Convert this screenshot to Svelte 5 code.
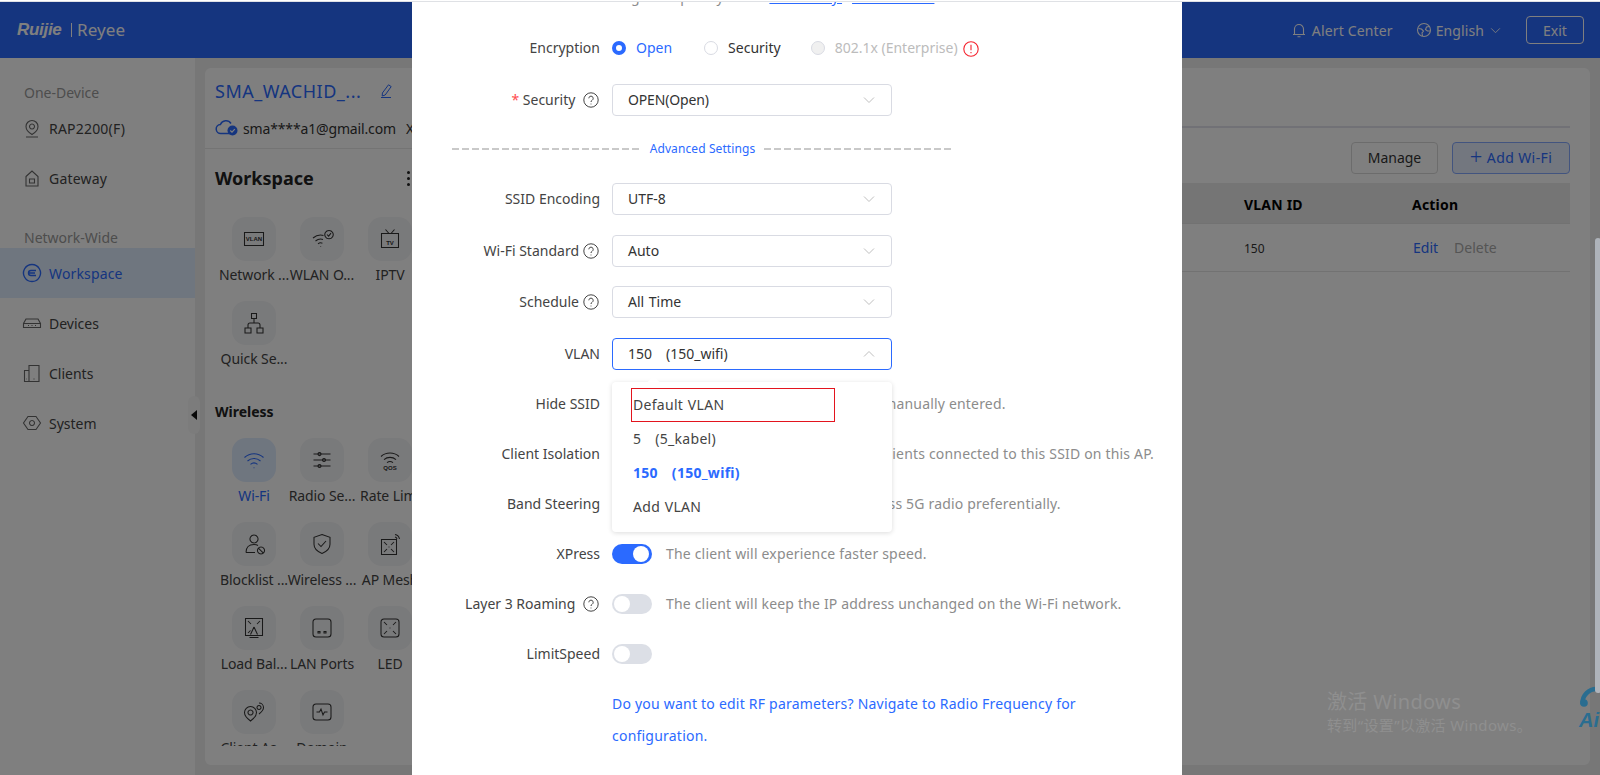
<script>
  const tileIcons = {
    vlan: { d: 'M2.500 5.500h19v13h-19z', text: 'VLAN', tx: 12, ty: 14.200, ts: 6.500 },
    wlan: { d: 'M3 11c3-2.600 7-3.600 10.500-2.600M5.500 14c2.200-1.800 5-2.400 7.500-1.600M8 16.800c1.300-1 3-1.200 4.400-.6M19 3.400a4.200 4.200 0 1 0 .01 0M17 7.500l1.600 1.600 2.400-3M10.500 19.400h.6' },
    tv: { d: 'M3.500 6.500h17v14h-17zM7.500 2.500l3.500 4M16.500 2.500l-3.500 4', text: 'TV', tx: 12, ty: 17.500, ts: 9 },
    quick: { d: 'M9.500 2.500h5v5h-5zM3 17h6v5H3zM15 17h6v5h-6zM12 7.500V12M6 17v-3a2 2 0 0 1 2-2h8a2 2 0 0 1 2 2v3' },
    wifi: { d: 'M2.500 9.500c5.500-5 13.500-5 19 0M5.500 13c3.800-3.400 9.200-3.400 13 0M8.500 16.400c2-1.700 5-1.700 7 0M11.600 19.800h.8' },
    radio: { d: 'M3.500 6h17M3.500 12h17M3.500 18h17M9.500 4.400a1.600 1.600 0 1 0 .01 0M14 10.400a1.600 1.600 0 1 0 .01 0M9.500 16.400a1.600 1.600 0 1 0 .01 0' },
    rate: { d: 'M3 8.500c5-4.600 13-4.600 18 0M6 11.600c3.400-3 8.600-3 12 0M9 14.600c1.800-1.400 4.200-1.400 6 0', text: 'QOS', tx: 12, ty: 21.500, ts: 6 },
    block: { d: 'M12 3a4 4 0 1 0 .01 0M4 20.500c0-5 2.800-8 8-8 1.600 0 3 .3 4 1M4 20.500h9M19 15a3.500 3.500 0 1 0 .01 0M16.600 16.300l4.800 4.800' },
    shield: { d: 'M12 2.500l8 2.800v7c0 4.400-3.600 7.400-8 9.200-4.400-1.800-8-4.800-8-9.200v-7zM8 11.500l3 3 5-5.500' },
    mesh: { d: 'M3.500 7.500h15v15h-15zM6 10l3 3M16 10l-3 3M6 20l3-3M16 20l-3-3M10.600 15h.8M17 2.500c2.200.4 4 2.200 4.500 4.500M17 5c1 .2 1.800 1 2 2' },
    load: { d: 'M3.500 2.500h17v17h-17zM6 5l3 3M18 5l-3 3M6 17l2.500-2.500M12 11l-3.500 7.500M12 11l3.500 7.500M7.500 21.500h9' },
    lan: { d: 'M6 3h12a3 3 0 0 1 3 3v12a3 3 0 0 1-3 3H6a3 3 0 0 1-3-3V6a3 3 0 0 1 3-3zM8 15.500h2v1.500H8zM14 15.500h2v1.500h-2z' },
    led: { d: 'M6 3h12a3 3 0 0 1 3 3v12a3 3 0 0 1-3 3H6a3 3 0 0 1-3-3V6a3 3 0 0 1 3-3zM6 6l3 3M18 6l-3 3M6 18l3-3M18 18l-3-3M11.600 12h.8' },
    pins: { d: 'M8.500 6.500a6 6 0 0 1 6 6c0 4-6 8.500-6 8.500s-6-4.500-6-8.500a6 6 0 0 1 6-6zM8.500 10a2.500 2.500 0 1 0 .01 0M17 3a4.500 4.500 0 0 1 4.500 4.500c0 3-4.500 6.500-4.500 6.500M17 5.500a2 2 0 1 0 .01 0' },
    domain: { d: 'M6 4h12a3 3 0 0 1 3 3v10a3 3 0 0 1-3 3H6a3 3 0 0 1-3-3V7a3 3 0 0 1 3-3zM6.500 12h3l1.500-3 2 6 1.500-3h3' }
  };

  const workspaceTiles = [
    { icon: 'vlan', label: 'Network ...' },
    { icon: 'wlan', label: 'WLAN O...' },
    { icon: 'tv', label: 'IPTV' },
    { icon: 'quick', label: 'Quick Se...' }
  ];
  const wirelessTiles = [
    { icon: 'wifi', label: 'Wi-Fi', active: true },
    { icon: 'radio', label: 'Radio Se...' },
    { icon: 'rate', label: 'Rate Limi' },
    { icon: 'block', label: 'Blocklist ...' },
    { icon: 'shield', label: 'Wireless ...' },
    { icon: 'mesh', label: 'AP Mesh' },
    { icon: 'load', label: 'Load Bal...' },
    { icon: 'lan', label: 'LAN Ports' },
    { icon: 'led', label: 'LED' },
    { icon: 'pins', label: 'Client As...' },
    { icon: 'domain', label: 'Domain' }
  ];
  const navA = [
    { label: 'RAP2200(F)', d: 'M10 2.500a6 6 0 0 1 6 6c0 3.500-3.500 6.500-6 8-2.500-1.500-6-4.500-6-8a6 6 0 0 1 6-6zM10 6a2.500 2.500 0 1 0 .01 0M4 19h12' },
    { label: 'Gateway', d: 'M4 8.500L10 3l6 5.500V18H4zM7.500 11h5v4h-5z' }
  ];
  const navB = [
    { label: 'Workspace', active: true, d: 'M10 1.500a8.500 8.500 0 1 0 .01 0M14 7.500H9a2.500 2.500 0 0 0 0 5h5M7 10h6' },
    { label: 'Devices', d: 'M4 6h12l2.500 4.500v4h-17v-4zM1.500 10.500h17M6 12.500h1M9.500 12.500h1M13 12.500h1' },
    { label: 'Clients', d: 'M7 2.500h10v16H7zM2.500 7.500H7v11H2.500zM11.500 16h1M4.500 16h.5' },
    { label: 'System', d: 'M6 3.500h8l4.500 6.500-4.500 6.500H6L1.500 10zM10 7.500a2.500 2.500 0 1 0 .01 0' }
  ];
  const selects = [
    { label: 'SSID Encoding', value: 'UTF-8' },
    { label: 'Wi-Fi Standard', value: 'Auto', help: true, tight: true },
    { label: 'Schedule', value: 'All Time', help: true }
  ];
  const vlanItems = [
    { text: 'Default VLAN' },
    { text: '5   (5_kabel)' },
    { text: '150   (150_wifi)', selected: true },
    { text: 'Add VLAN' }
  ];
</script>

{#snippet help()}
  <svg class="help" viewBox="0 0 16 16"><circle cx="8" cy="8" r="7.200"/><path d="M5.800 6.300a2.200 2.200 0 1 1 3.400 1.900c-.8.5-1.200.9-1.200 1.800M8 11.600v.8"/></svg>
{/snippet}

{#snippet chevron(up)}
  <svg class="chev" viewBox="0 0 12 8"><path d={up ? 'M1 6.500l5-5 5 5' : 'M1 1.500l5 5 5-5'}/></svg>
{/snippet}

{#snippet tile(t)}
  <div class="cell" class:on={t.active}>
    <div class="tile">
      <svg viewBox="0 0 24 24">
        <path d={tileIcons[t.icon].d}/>
        {#if tileIcons[t.icon].text}
          <text x={tileIcons[t.icon].tx} y={tileIcons[t.icon].ty} font-size={tileIcons[t.icon].ts}>{tileIcons[t.icon].text}</text>
        {/if}
      </svg>
    </div>
    <div class="cell-label">{t.label}</div>
  </div>
{/snippet}

<div class="strip"></div>
<div class="page">
  <header class="top">
    <div class="logo"><span class="ruijie">Ruijie</span><span class="bar"></span><span class="reyee">Reyee</span></div>
    <div class="top-right">
      <span class="top-item alert">
        <svg viewBox="0 0 16 16" class="top-ic"><path d="M2 12.500h12M3.500 12.500V7a4.500 4.500 0 0 1 9 0v5.500M6.500 14.800h3"/></svg>
        Alert Center
      </span>
      <span class="top-item lang">
        <svg viewBox="0 0 16 16" class="top-ic"><circle cx="8" cy="8" r="6.500"/><path d="M2.500 6.500l3 .5 2 2-1.500 2 .5 3M13.500 4.500L10.500 5l-1 2.500 2 1.500 3 0"/></svg>
        English
        <svg viewBox="0 0 12 8" class="lang-chev"><path d="M1 1.500l5 5 5-5"/></svg>
      </span>
      <button class="exit">Exit</button>
    </div>
  </header>

  <div class="body">
    <aside class="side">
      <div class="side-head first">One-Device</div>
      {#each navA as n}
        <div class="nav lift"><svg viewBox="0 0 20 20"><path d={n.d}/></svg>{n.label}</div>
      {/each}
      <div class="side-head second">Network-Wide</div>
      {#each navB as n}
        <div class="nav" class:active={n.active}><svg viewBox="0 0 20 20"><path d={n.d}/></svg>{n.label}</div>
      {/each}
      <div class="collapse"><span class="tri"></span></div>
    </aside>

    <main class="main">
      <div class="card">
        <section class="panel">
          <div class="device">
            <div class="dev-title">
              <span>SMA_WACHID_...</span>
              <svg viewBox="0 0 16 16"><path d="M10.500 1.800l2.700 1.800-6 8.400-3 1 .2-3zM3 14.500h10"/></svg>
            </div>
            <div class="dev-mail">
              <svg viewBox="0 0 24 18" class="cloud">
                <path d="M15 14.500H6a4.500 4.500 0 0 1-.6-9A6 6 0 0 1 16 4.500"/>
                <circle cx="17.500" cy="11.500" r="5" class="cloud-dot"/>
                <path d="M15.300 11.500l1.700 1.700 2.800-3" class="cloud-check"/>
              </svg>
              <span class="mail">sma****a1@gmail.com</span>
              <span class="x">X</span>
            </div>
          </div>
          <div class="scroll">
            <div class="ws-head"><h2>Workspace</h2><span class="dots"><i></i><i></i><i></i></span></div>
            <div class="grid">
              {#each workspaceTiles as t}{@render tile(t)}{/each}
            </div>
            <h3>Wireless</h3>
            <div class="grid">
              {#each wirelessTiles as t}{@render tile(t)}{/each}
            </div>
          </div>
        </section>

        <section class="wifi">
          <div class="tabs"></div>
          <div class="tools">
            <button class="btn">Manage</button>
            <button class="btn primary"><span class="plus">+</span> Add Wi-Fi</button>
          </div>
          <div class="thead"><span></span><span>VLAN ID</span><span>Action</span></div>
          <div class="trow">
            <span></span>
            <span class="num">150</span>
            <span class="acts"><span class="edit">Edit</span><span class="del">Delete</span></span>
          </div>
        </section>
      </div>
    </main>
  </div>

  <div class="mask"></div>

  <div class="watermark">
    <div class="wm1">激活 Windows</div>
    <div class="wm2">转到“设置”以激活 Windows。</div>
  </div>

  <div class="robot">
    <svg viewBox="0 0 24 24"><path d="M3.500 21a14 14 0 0 1 15-15"/><circle cx="5" cy="20" r="3.800" class="fill"/></svg>
    <span>Ai</span>
  </div>

  <div class="modal">
    <p class="hint">target frequency band. <u>Its Validity.</u><u class="cause">View Causes</u></p>

    <div class="row">
      <div class="lab">Encryption</div>
      <div class="ctl radios">
        <span class="radio checked"></span><span class="rtext blue first-r">Open</span>
        <span class="radio"></span><span class="rtext">Security</span>
        <span class="radio dis"></span><span class="rtext gray">802.1x (Enterprise)</span>
        <svg class="warn" viewBox="0 0 16 16"><circle cx="8" cy="8" r="7.200"/><path d="M8 3.800v5.400M8 11v1.200"/></svg>
      </div>
    </div>

    <div class="row">
      <div class="lab"><span class="star">*</span> Security {@render help()}</div>
      <div class="select"><span class="narrow">OPEN(Open)</span>{@render chevron(false)}</div>
    </div>

    <div class="divider"><span class="dash"></span><span class="dtext">Advanced Settings</span><span class="dash"></span></div>

    {#each selects as s}
      <div class="row" class:tight={s.tight}>
        <div class="lab">{s.label}{#if s.help}{@render help()}{/if}</div>
        <div class="select"><span>{s.value}</span>{@render chevron(false)}</div>
      </div>
    {/each}

    <div class="row short">
      <div class="lab">VLAN</div>
      <div class="select open"><span>150   (150_wifi)</span>{@render chevron(true)}</div>
    </div>

    <div class="row short">
      <div class="lab">Hide SSID</div>
      <div class="ctl"><span class="toggle"></span><span class="desc">The SSID is hidden and must be manually entered.</span></div>
    </div>
    <div class="row short">
      <div class="lab">Client Isolation</div>
      <div class="ctl"><span class="toggle"></span><span class="desc">Prevent communication among clients connected to this SSID on this AP.</span></div>
    </div>
    <div class="row short">
      <div class="lab">Band Steering</div>
      <div class="ctl"><span class="toggle"></span><span class="desc">The 5G-supported client will access 5G radio preferentially.</span></div>
    </div>
    <div class="row short">
      <div class="lab">XPress</div>
      <div class="ctl"><span class="toggle on"></span><span class="desc">The client will experience faster speed.</span></div>
    </div>
    <div class="row short">
      <div class="lab">Layer 3 Roaming {@render help()}</div>
      <div class="ctl"><span class="toggle"></span><span class="desc">The client will keep the IP address unchanged on the Wi-Fi network.</span></div>
    </div>
    <div class="row short">
      <div class="lab">LimitSpeed</div>
      <div class="ctl"><span class="toggle"></span></div>
    </div>
    <p class="rf">Do you want to edit RF parameters? Navigate to Radio Frequency for configuration.</p>

    <div class="menu">
      <span class="menu-arrow"></span>
      {#each vlanItems as v}
        <div class="opt" class:sel={v.selected}>{v.text}</div>
      {/each}
      <div class="redbox"></div>
    </div>
  </div>

  <div class="scrollbar"></div>
</div>

<style>
  :global(body) { margin: 0; overflow: hidden; background: #fff; }
  * { box-sizing: border-box; }
  .strip { height: 2px; background: #fff; border-bottom: 1px solid #dfe1e5; }
  .page {
    position: relative; height: 773px; overflow: hidden; background: #eee;
    font-family: "Noto Sans", "Noto Sans CJK SC", sans-serif; font-size: 14px; color: #333;
  }
  .top {
    height: 56px; background: #2b6aff; color: #fff; display: flex; align-items: center;
    justify-content: space-between; padding: 0 16px 0 17px;
  }
  .logo { display: flex; align-items: center; color: #fff; height: 28px; margin-top: -1px; }
  .ruijie { font: italic 700 17px "Liberation Sans", sans-serif; letter-spacing: -.3px; width: 51px; }
  .bar { width: 1px; height: 14px; background: #fff; margin: 0 5px 0 3px; }
  .reyee { font: 400 17px "Noto Sans", sans-serif; letter-spacing: .1px; }
  .top-right { display: flex; align-items: center; }
  .top-item { display: flex; align-items: center; gap: 5px; margin-right: 25px; }
  .alert { margin-right: 23px; letter-spacing: .15px; }
  .top-ic { width: 16px; height: 16px; fill: none; stroke: #fff; stroke-width: 1.100; }
  .lang { margin-right: 25px; gap: 4px; letter-spacing: .1px; }
  .lang-chev { width: 11px; height: 7px; fill: none; stroke: #fff; margin-left: 2px; }
  .exit {
    width: 58px; height: 28px; background: none; border: 1px solid #fff; border-radius: 4px;
    color: #fff; font: inherit; padding: 0;
  }

  .body { display: flex; height: 717px; }
  .side { width: 195px; background: #fff; position: relative; flex: none; }
  .side-head { color: #9a9a9a; line-height: 24px; padding-left: 24px; }
  .first { padding-top: 23px; height: 46px; }
  .second { margin-top: 22px; height: 22px; line-height: 24px; }
  .nav { height: 50px; display: flex; align-items: center; padding-left: 22px; gap: 7px; color: #444; }
  .nav.lift { padding-bottom: 2px; letter-spacing: .2px; }
  .nav svg { width: 20px; height: 20px; fill: none; stroke: #666; stroke-width: 1.100; }
  .nav.active { background: #dfecff; color: #2b6aff; letter-spacing: .15px; }
  .nav.active svg { stroke: #2b6aff; stroke-width: 1.400; }
  .collapse {
    position: absolute; left: 188px; top: 338px; width: 12px; height: 38px; background: #f8f8f8;
    border-radius: 6px; display: flex; align-items: center; justify-content: center;
  }
  .tri { border: 5px solid transparent; border-right: 6px solid #111; border-left: 0; }

  .main { flex: 1; padding: 10px; }
  .card { background: #fff; height: 697px; border-radius: 6px; display: flex; }
  .panel { width: 220px; flex: none; overflow: hidden; }
  .device { height: 81px; padding: 10px 0 0 10px; border-bottom: 1px solid #e8e8e8; }
  .dev-title { display: flex; align-items: center; height: 26px; color: #2b6aff; font-size: 18px; letter-spacing: .5px; }
  .dev-title svg { width: 16px; height: 16px; fill: none; stroke: #2b6aff; margin-left: 17px; }
  .dev-mail { display: flex; align-items: center; height: 20px; margin-top: 14px; white-space: nowrap; }
  .mail { letter-spacing: -.15px; }
  .cloud { width: 24px; height: 18px; fill: none; stroke: #2b6aff; stroke-width: 1.500; margin-right: 4px; flex: none; }
  .cloud-dot { fill: #2b6aff; stroke: none; }
  .cloud-check { stroke: #fff; stroke-width: 1.200; }
  .x { margin-left: 10px; }
  .scroll { height: 597px; overflow: hidden; padding-top: 17px; }
  .ws-head { display: flex; justify-content: space-between; align-items: center; height: 24px; padding: 0 15px 0 10px; margin-bottom: 27px; }
  h2 { margin: 0; font-size: 18px; font-weight: 700; color: #222; }
  .dots { display: flex; flex-direction: column; gap: 3px; }
  .dots i { display: block; width: 3px; height: 3px; background: #222; border-radius: 50%; }
  h3 { margin: 15px 0 14px 10px; font-size: 14px; line-height: 24px; font-weight: 700; color: #222; }
  .grid { display: grid; grid-template-columns: repeat(3, 68px); padding-left: 15px; }
  .cell { height: 84px; display: flex; flex-direction: column; align-items: center; min-width: 0; }
  .tile { width: 44px; height: 44px; border-radius: 14px; background: #f3f4f6; display: flex; align-items: center; justify-content: center; flex: none; }
  .tile svg { width: 24px; height: 24px; fill: none; stroke: #333; stroke-width: 1.050; }
  .tile text { stroke: none; fill: #333; font: 700 6px "Liberation Sans", sans-serif; text-anchor: middle; }
  .cell-label { margin-top: 4px; line-height: 20px; white-space: nowrap; color: #444; letter-spacing: -.1px; }
  .cell.on .tile { background: #dfecff; }
  .cell.on svg { stroke: #2b6aff; }
  .cell.on .cell-label { color: #2b6aff; }

  .wifi { flex: 1; padding-right: 20px; min-width: 0; }
  .tabs { height: 60px; border-bottom: 2px solid #e2e3ec; }
  .tools { display: flex; justify-content: flex-end; gap: 14px; margin-top: 14px; }
  .btn { height: 32px; width: 87px; padding: 0 0 2px; background: #fff; border: 1px solid #d9d9d9; border-radius: 4px; font: inherit; color: #333; }
  .primary { width: 118px; background: #e6eeff; border-color: #85a9ff; color: #2b6aff; letter-spacing: .4px; }
  .plus { font-size: 22px; font-weight: 300; line-height: 14px; vertical-align: -2px; }
  .thead, .trow { display: grid; grid-template-columns: 1fr 168px 158px; align-items: center; }
  .thead { margin-top: 9px; height: 41px; padding-top: 2px; background: #ebebeb; border-bottom: 1px solid #e4e4e4; font-weight: 700; color: #000; letter-spacing: .2px; }
  .trow { height: 48px; border-bottom: 1px solid #e4e4e4; }
  .num { font-size: 12px; padding-top: 2px; }
  .acts { display: flex; gap: 16px; padding-left: 1px; }
  .edit { color: #2b6aff; }
  .del { color: #aaa; }

  .mask { position: absolute; inset: 0; background: rgba(0, 0, 0, .5); }

  .watermark { position: absolute; left: 1327px; top: 687px; color: #8f8f8f; white-space: nowrap; }
  .wm1 { font-size: 20px; line-height: 26px; letter-spacing: .35px; }
  .wm2 { font-size: 15px; line-height: 20px; letter-spacing: .35px; }
  .robot { position: absolute; left: 1579px; top: 681px; width: 30px; height: 50px; color: #2a6d90; }
  .robot svg { display: block; width: 24px; height: 24px; fill: none; stroke: #2a6d90; stroke-width: 4.500; }
  .robot .fill { fill: #2a6d90; stroke: none; }
  .robot span { font: italic 700 20px/20px "Liberation Sans", sans-serif; margin-top: 3px; display: block; }
  .scrollbar { position: absolute; left: 1595px; top: 236px; width: 6px; height: 455px; border-radius: 3px; background: #aeb3ba; }

  .modal { position: absolute; left: 412px; top: 0; width: 770px; bottom: 0; background: #fff; overflow: hidden; }
  .hint { margin: -16px 0 24px 200px; line-height: 22px; color: #8c8c8c; white-space: nowrap; letter-spacing: .13px; }
  .hint u { color: #2b6aff; }
  .cause { margin-left: 10px; }
  .row { display: flex; height: 32px; margin-bottom: 20px; align-items: center; }
  .row.tight { margin-bottom: 19px; }
  .row.short { margin-bottom: 18px; }
  .lab { width: 200px; flex: none; padding: 0 12px 2px 0; display: flex; justify-content: flex-end; align-items: center; white-space: pre; color: #444; height: 32px; }
  .star { color: #ff4d4f; margin-right: 0; }
  .help { width: 16px; height: 16px; margin-left: 4px; margin-right: 1px; fill: none; stroke: #444; stroke-width: 1; position: relative; top: 1px; }
  .ctl { display: flex; align-items: center; }
  .radios { padding-bottom: 0; }
  .radio { width: 14px; height: 14px; border-radius: 50%; border: 1px solid #d9dbe3; background: #fff; flex: none; }
  .radio.checked { border: 4px solid #2b6aff; }
  .radio.dis { background: #f0f0f0; }
  .rtext { margin: -2px 30px 0 10px; }
  .rtext.first-r { margin-right: 32px; }
  .blue { color: #2b6aff; }
  .gray { color: #bcbcbc; margin-right: 5px; }
  .warn { width: 16px; height: 16px; fill: none; stroke: #f5222d; stroke-width: 1.100; margin-top: 1px; }
  .select {
    width: 280px; height: 32px; border: 1px solid #d9dbe3; border-radius: 4px; padding: 0 15px 2px;
    display: flex; align-items: center; justify-content: space-between; white-space: pre; color: #333; word-spacing: 1px;
  }
  .narrow { letter-spacing: -.15px; }
  .select.open { border-color: #2b6aff; }
  .chev { width: 12px; height: 8px; fill: none; stroke: #bfbfbf; margin: 2px 1px 0 0; flex: none; }
  .divider { display: flex; align-items: center; gap: 9px; width: 501px; margin: 23px 0 24px 40px; height: 20px; }
  .dash { flex: 1; height: 2px; background: repeating-linear-gradient(90deg, #c9c9c9 0 7px, transparent 7px 10px); }
  .dtext { color: #2b6aff; font-size: 12px; white-space: nowrap; letter-spacing: .1px; padding-bottom: 2px; }
  .toggle { width: 40px; height: 20px; border-radius: 10px; background: #dcdfe6; position: relative; flex: none; }
  .toggle::after { content: ""; position: absolute; left: 2px; top: 2px; width: 16px; height: 16px; border-radius: 50%; background: #fff; }
  .toggle.on { background: #2b6aff; }
  .toggle.on::after { left: 21px; }
  .desc { margin: -2px 0 0 14px; color: #8c8c8c; white-space: nowrap; letter-spacing: .18px; }
  .rf { margin: 0 0 0 200px; width: 480px; line-height: 32px; color: #2b6aff; letter-spacing: .22px; }
  .menu {
    position: absolute; left: 200px; top: 380px; width: 280px; height: 150px; background: #fff; border-radius: 4px;
    padding: 6px 0 0 21px; box-shadow: 0 1px 5px rgba(0, 0, 0, .14);
  }
  .menu-arrow { position: absolute; left: 37px; top: -4px; width: 9px; height: 9px; background: #fff; transform: rotate(45deg); }
  .opt { position: relative; height: 34px; line-height: 34px; white-space: pre; color: #444; letter-spacing: .3px; word-spacing: .7px; }
  .opt.sel { color: #2b6aff; font-weight: 700; }
  .redbox { position: absolute; left: 19px; top: 6px; width: 204px; height: 34px; border: 1px solid #e3141e; }
</style>
